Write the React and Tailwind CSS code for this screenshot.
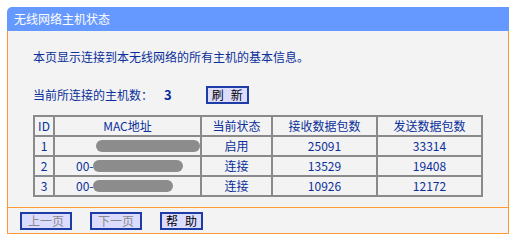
import React from "react";

const hosts = [
  { id: 1, mac: "", blob: "ml-[20px] w-[110px]", status: "启用", rx: "25091", tx: "33314" },
  { id: 2, mac: "00-", blob: "w-[90px]", status: "连接", rx: "13529", tx: "19408" },
  { id: 3, mac: "00-", blob: "w-[80px]", status: "连接", rx: "10926", tx: "12172" },
];

const cell =
  "h-[20px] border border-[#8a8a8a] flex items-center justify-center text-[#0a2f9a]";

const btn =
  "h-[18px] bg-[#dcdcff] border-2 border-[#1d3ca6] flex items-center justify-center";

const App = () => {
  return (
    <div
      className="w-[518px] h-[242px] bg-white pt-[7px] pl-[7px] text-[12px] leading-[14px]"
      style={{ fontFamily: '"Noto Sans CJK SC", "Liberation Sans", sans-serif' }}
    >
      <div className="w-[502px]">
        {/* title bar */}
        <div className="h-[24px] bg-[#6699ff] rounded-tl-[5px] text-white flex items-center pl-[7px]">
          无线网络主机状态
        </div>

        {/* body */}
        <div className="bg-[#f3f3f3] border-x border-[#ff9933] pl-[25px] pt-[19px] pb-[10px] text-[#0a2f9a]">
          <p>本页显示连接到本无线网络的所有主机的基本信息。</p>

          <div className="mt-[22px] h-[18px] flex items-center">
            <span>当前所连接的主机数：</span>
            <span className="ml-[11px] font-bold text-[13px]">3</span>
            <button className={btn + " ml-[34px] w-[43px] gap-[7px] text-black"}>
              <span>刷</span>
              <span>新</span>
            </button>
          </div>

          {/* host table */}
          <div className="mt-[11px] w-[450px] border border-[#8a8a8a] grid grid-cols-[20px_147px_71px_105px_105px]">
            <div className={cell}>ID</div>
            <div className={cell}>MAC地址</div>
            <div className={cell}>当前状态</div>
            <div className={cell}>接收数据包数</div>
            <div className={cell}>发送数据包数</div>

            {hosts.map((h) => (
              <React.Fragment key={h.id}>
                <div className={cell}>{h.id}</div>
                <div className={cell + " !justify-start pl-[21px]"}>
                  {h.mac && <span>{h.mac}</span>}
                  <span className={"h-[12px] rounded-full bg-[#8c8c8c] " + h.blob} />
                </div>
                <div className={cell}>{h.status}</div>
                <div className={cell}>{h.rx}</div>
                <div className={cell}>{h.tx}</div>
              </React.Fragment>
            ))}
          </div>
        </div>

        {/* footer buttons */}
        <div className="bg-[#f3f3f3] border border-[#ff9933] h-[27px] pl-[12px] pt-[4px] flex gap-[18px]">
          <button className={btn + " w-[52px] text-[#8a8a8a]"}>上一页</button>
          <button className={btn + " w-[52px] text-[#8a8a8a]"}>下一页</button>
          <button className={btn + " w-[43px] gap-[7px] text-black"}>
            <span>帮</span>
            <span>助</span>
          </button>
        </div>
      </div>
    </div>
  );
};

export default App;
